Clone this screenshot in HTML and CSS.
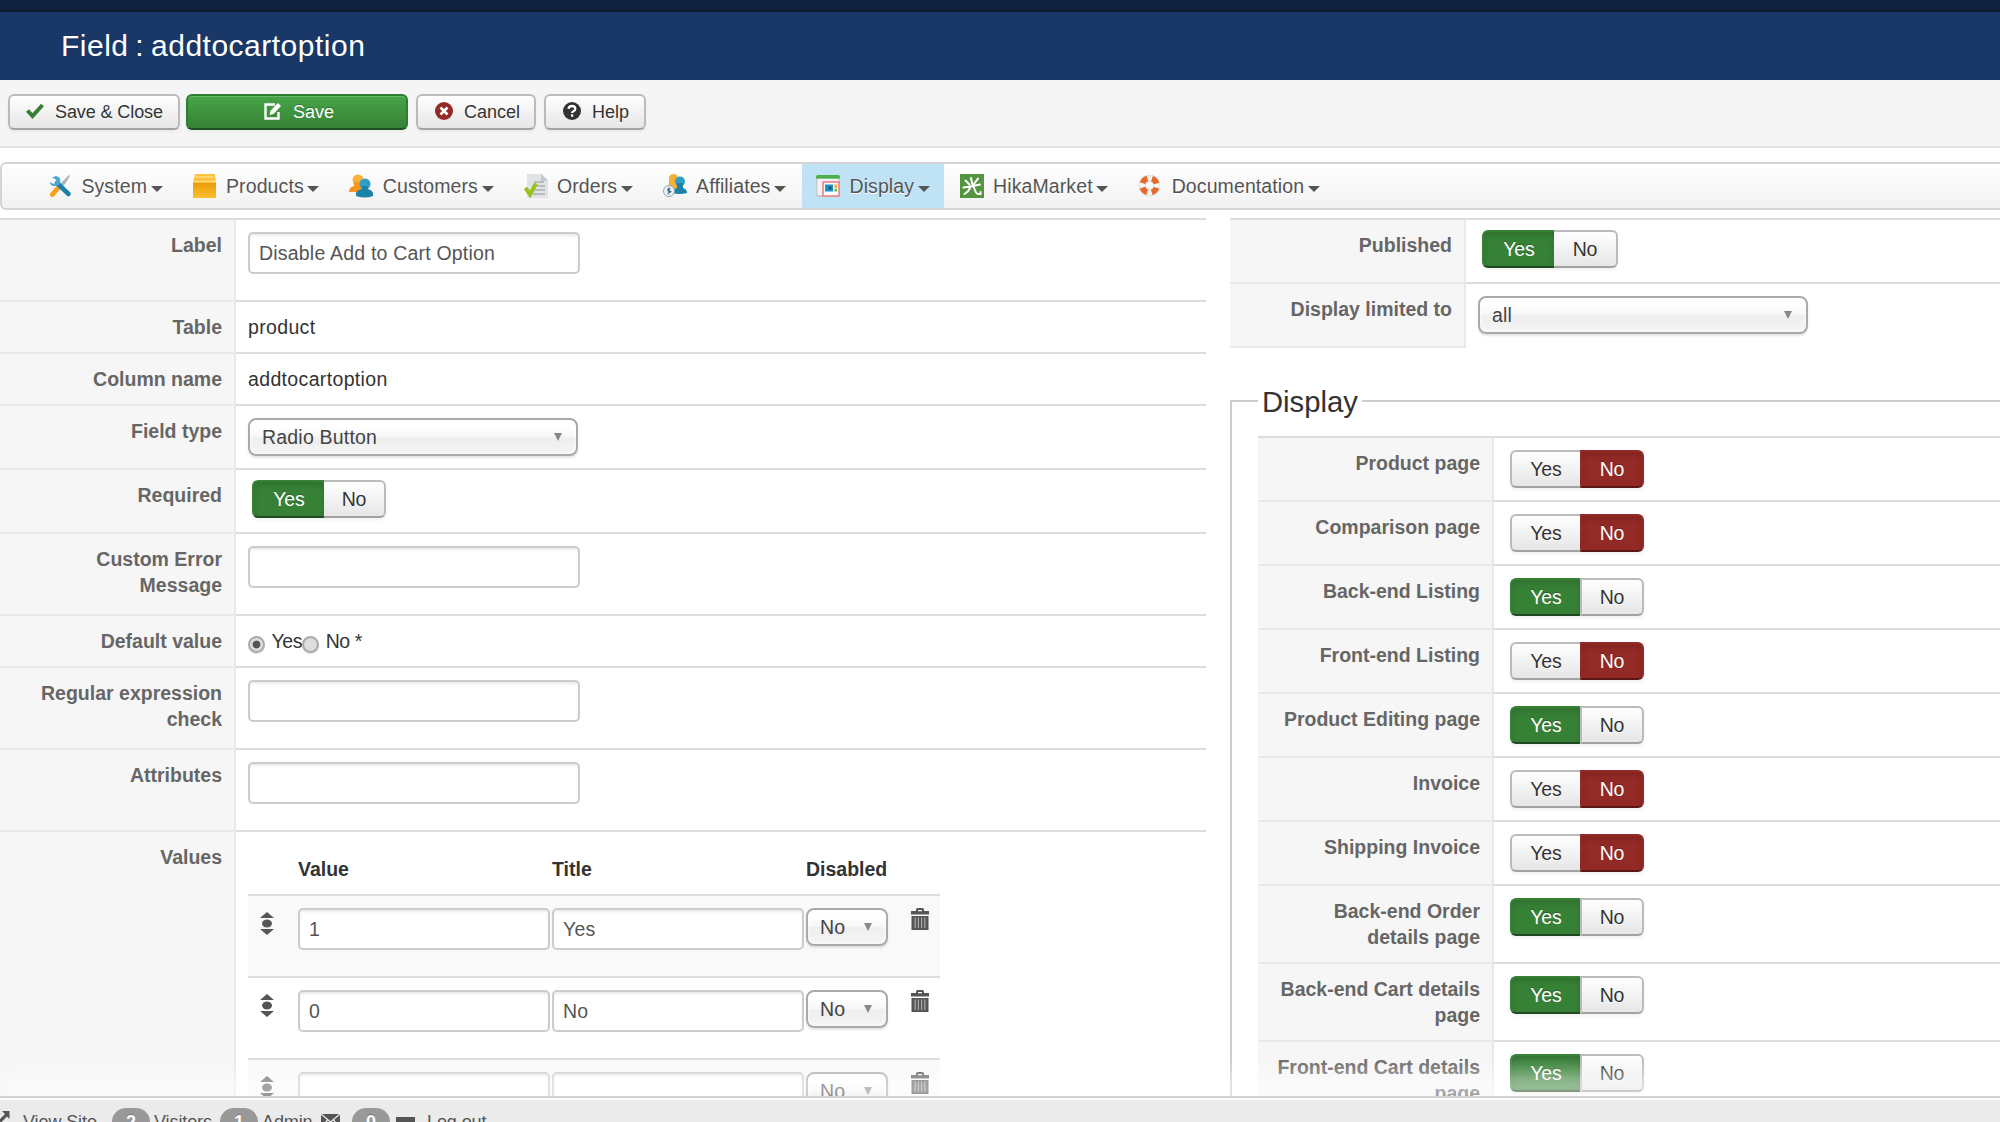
FILE: index.html
```html
<!DOCTYPE html>
<html lang="en">
<head>
    <meta charset="UTF-8">
    <title>Field : addtocartoption</title>
    <link rel="stylesheet" href="styles.css">
</head>
<body>
    <!-- Shared icons -->
    <svg class="defs" width="0" height="0">
        <symbol id="icon-move" viewBox="0 0 14 23">
            <path d="M7 0l7 6H0zM7 23l7-6H0z"/>
            <ellipse cx="7" cy="11.500" rx="5" ry="4"/>
        </symbol>
        <symbol id="icon-trash" viewBox="0 0 18 22">
            <path d="M5 3V1.5Q5 0 6.500 0h5Q13 0 13 1.500V3h5v3.500H0V3zM7 2v1.200h4V2z" fill-rule="evenodd"/>
            <path d="M.5 8h17v14H.5z"/>
            <path d="M4.200 9.500v10.500M7.400 9.500v10.500M10.600 9.500v10.500M13.800 9.500v10.500" stroke="#aaa" stroke-width="1.200"/>
        </symbol>
    </svg>

    <div class="topbar"></div>
    <header class="header">
        <h1>Field : addtocartoption</h1>
    </header>

    <div class="toolbar">
        <button class="btn btn-apply">
            <svg width="18" height="18" viewBox="0 0 18 18"><path d="M1.500 8.500l5 5.500L16.500 3" fill="none" stroke="#378137" stroke-width="4"/></svg>
            Save &amp; Close
        </button>
        <button class="btn btn-success">
            <svg width="18" height="18" viewBox="0 0 18 18"><path d="M11 2.500H1.500v14h13V10" fill="none" stroke="#fff" stroke-width="2.400"/><path d="M5.500 13l1-4.200L14 1l3 3-7.500 8z" fill="#fff"/></svg>
            Save
        </button>
        <button class="btn btn-cancel">
            <svg width="18" height="18" viewBox="0 0 18 18"><circle cx="9" cy="9" r="9" fill="#942a25"/><path d="M5.500 5.500l7 7M12.500 5.500l-7 7" stroke="#fff" stroke-width="2.600"/></svg>
            Cancel
        </button>
        <button class="btn btn-help">
            <svg width="18" height="18" viewBox="0 0 18 18"><circle cx="9" cy="9" r="9" fill="#333"/><path d="M5.500 6.800Q5.800 4 9 4t3.300 2.700Q12.300 8.500 10.400 9.300 9.100 9.900 9.100 11" fill="none" stroke="#fff" stroke-width="2.300"/><path d="M7.900 12.300h2.400v2.400H7.900z" fill="#fff"/></svg>
            Help
        </button>
    </div>

    <nav class="navbar">
        <a class="nav-item">
            <svg width="24" height="24" viewBox="0 0 24 24"><path d="M22 2l-1-1-7 7-3 4 2 2 4-4z" fill="#aeb4b8"/><path d="M10 14L4.500 20.500" stroke="#f6a11c" stroke-width="5" stroke-linecap="round"/><path d="M9 9l11.500 11" stroke="#1b7fae" stroke-width="4.500" stroke-linecap="round"/><path d="M4 4l3.500 1 .5 3.500-2.500 1.500-3.500-2Q2 12 6.500 12q5 0 6-4Q12.500 2 7.500 2z" fill="#4ba7d4"/></svg>
            <span>System</span><i class="caret"></i>
        </a>
        <a class="nav-item">
            <svg width="24" height="24" viewBox="0 0 24 24"><path d="M2 0h20l1 8H0z" fill="#fbc340"/><path d="M0 8h23v16H0z" fill="url(#box)"/><path d="M0 7h23v1.500H0z" fill="#ffe08a"/><path d="M2 3h19" stroke="#ffdc7c" stroke-width="1.500"/><defs><linearGradient id="box" x2="0" y2="1"><stop stop-color="#e99a06"/><stop offset="1" stop-color="#fdc02f"/></linearGradient></defs></svg>
            <span>Products</span><i class="caret"></i>
        </a>
        <a class="nav-item">
            <svg width="24" height="24" viewBox="0 0 24 24"><circle cx="9" cy="6" r="5.500" fill="#fbb03b"/><path d="M0 18q0-5 5-6V8h8v10z" fill="#f7941d"/><circle cx="16" cy="10" r="5.500" fill="#2f9fca"/><path d="M7 22v-3q1-3 6-4v-3h6v3q4 1 5 4v3q-8 3-17 0z" fill="#1b82a8"/></svg>
            <span>Customers</span><i class="caret"></i>
        </a>
        <a class="nav-item">
            <svg width="24" height="24" viewBox="0 0 24 24"><path d="M3 0h15l6 6v18H3z" fill="#dfe3e6"/><path d="M17 0l7 7h-7z" fill="#c3c9cd"/><path d="M10 8h10M12 12h9M11 16h10M9 20h12" stroke="#a9b0b4" stroke-width="1.600"/><path d="M1.500 14L6 20.500 12 9.500" fill="none" stroke="#96c11f" stroke-width="4"/></svg>
            <span>Orders</span><i class="caret"></i>
        </a>
        <a class="nav-item">
            <svg width="24" height="24" viewBox="0 0 24 24"><path d="M6 15V5q0-5 4.500-5T15 5v10z" fill="#f9ae35"/><circle cx="17" cy="7.500" r="5" fill="#2f9fca"/><path d="M9 19q0-4 5-5V9h6v5q4 1 4 5-7 2-15 0z" fill="#1b82a8"/><circle cx="6" cy="17" r="5.500" fill="#eef3f6" stroke="#8fa9b8"/><path d="M7.500 15Q4.500 14 4.800 16t2.500 1.500T4.500 19.500M6 13.500v7" fill="none" stroke="#41708c" stroke-width="1.300"/></svg>
            <span>Affiliates</span><i class="caret"></i>
        </a>
        <a class="nav-item active">
            <svg width="24" height="24" viewBox="0 0 24 24"><rect y="1" width="24" height="22" rx="2" fill="#c5cbce"/><path d="M1.500 5h21v16h-21z" fill="#f1f4f5"/><path d="M0 4.500V3q0-2 2-2h20q2 0 2 2v1.500z" fill="#4bb04a"/><rect x="7" y="8" width="16" height="14" fill="#fff" stroke="#eb8280" stroke-width="1.600"/><path d="M9 10.500h8v7H9z" fill="#1f94c5"/><path d="M12.500 12.500h3v3h-3z" fill="#1a5373"/><path d="M18.500 10.500H21V14h-2.500z" fill="#f3a72d"/><path d="M18.500 14.800H21v2.700h-2.500z" fill="#58b158"/></svg>
            <span>Display</span><i class="caret"></i>
        </a>
        <a class="nav-item">
            <svg width="24" height="24" viewBox="0 0 24 24"><path d="M0 0h24v24H0z" fill="#559440"/><path d="M11 4l1.500 7M5.500 6.500l4 4M18 4.500L14 10M3.500 13.500Q12 12.500 20 10.500M10.500 13Q9 17.500 4.500 20M13.500 12.500l2 5q1 2.500 3 2.500h2v-2" fill="none" stroke="#fff" stroke-width="2" stroke-linecap="round"/></svg>
            <span>HikaMarket</span><i class="caret"></i>
        </a>
        <a class="nav-item">
            <svg width="24" height="24" viewBox="0 0 24 24"><circle cx="11.500" cy="11.500" r="7.300" fill="none" stroke="#d2d4d5" stroke-width="7"/><circle cx="11.500" cy="11.500" r="7.300" fill="none" stroke="#f4f4f4" stroke-width="5.800"/><circle cx="11.500" cy="11.500" r="7.300" fill="none" stroke="#e8672a" stroke-width="5.600" stroke-dasharray="6.800 4.670" stroke-dashoffset="-2.300"/></svg>
            <span>Documentation</span><i class="caret"></i>
        </a>
    </nav>

    <main class="content">
        <div class="col-left">
            <table class="admintable">
                <tr>
                    <td class="key">Label</td>
                    <td><input type="text" value="Disable Add to Cart Option"></td>
                </tr>
                <tr>
                    <td class="key">Table</td>
                    <td>product</td>
                </tr>
                <tr>
                    <td class="key">Column name</td>
                    <td>addtocartoption</td>
                </tr>
                <tr>
                    <td class="key">Field type</td>
                    <td><div class="select">Radio Button</div></td>
                </tr>
                <tr>
                    <td class="key">Required</td>
                    <td class="tight"><div class="toggle toggle-required"><span class="yes on">Yes</span><span class="no">No</span></div></td>
                </tr>
                <tr>
                    <td class="key">Custom Error Message</td>
                    <td><input type="text"></td>
                </tr>
                <tr>
                    <td class="key">Default value</td>
                    <td>
                        <div class="radios">
                            <input type="radio" name="default" checked><label>Yes</label><input type="radio" name="default"><label>No *</label>
                        </div>
                    </td>
                </tr>
                <tr>
                    <td class="key">Regular expression check</td>
                    <td><input type="text"></td>
                </tr>
                <tr>
                    <td class="key">Attributes</td>
                    <td><input type="text"></td>
                </tr>
                <tr>
                    <td class="key">Values</td>
                    <td>
                        <div class="values">
                            <div class="values-head">
                                <span class="c-move"></span><span class="c-input">Value</span><span class="c-input">Title</span><span>Disabled</span>
                            </div>
                            <div class="values-row odd">
                                <svg class="move" width="14" height="23"><use href="#icon-move"/></svg>
                                <input type="text" value="1"><input type="text" value="Yes">
                                <div class="select select-small">No</div>
                                <svg class="trash" width="18" height="22"><use href="#icon-trash"/></svg>
                            </div>
                            <div class="values-row">
                                <svg class="move" width="14" height="23"><use href="#icon-move"/></svg>
                                <input type="text" value="0"><input type="text" value="No">
                                <div class="select select-small">No</div>
                                <svg class="trash" width="18" height="22"><use href="#icon-trash"/></svg>
                            </div>
                            <div class="values-row odd">
                                <svg class="move" width="14" height="23"><use href="#icon-move"/></svg>
                                <input type="text"><input type="text">
                                <div class="select select-small">No</div>
                                <svg class="trash" width="18" height="22"><use href="#icon-trash"/></svg>
                            </div>
                        </div>
                    </td>
                </tr>
            </table>
        </div>

        <div class="col-right">
            <table class="admintable publish">
                <tr>
                    <td class="key">Published</td>
                    <td class="tight"><div class="toggle toggle-published"><span class="yes on">Yes</span><span class="no">No</span></div></td>
                </tr>
                <tr>
                    <td class="key">Display limited to</td>
                    <td><div class="select">all</div></td>
                </tr>
            </table>

            <section class="fieldset">
                <h2 class="legend"><span>Display</span></h2>
                <table class="admintable">
                    <tr>
                        <td class="key">Product page</td>
                        <td><div class="toggle"><span class="yes">Yes</span><span class="no on">No</span></div></td>
                    </tr>
                    <tr>
                        <td class="key">Comparison page</td>
                        <td><div class="toggle"><span class="yes">Yes</span><span class="no on">No</span></div></td>
                    </tr>
                    <tr>
                        <td class="key">Back-end Listing</td>
                        <td><div class="toggle"><span class="yes on">Yes</span><span class="no">No</span></div></td>
                    </tr>
                    <tr>
                        <td class="key">Front-end Listing</td>
                        <td><div class="toggle"><span class="yes">Yes</span><span class="no on">No</span></div></td>
                    </tr>
                    <tr>
                        <td class="key">Product Editing page</td>
                        <td><div class="toggle"><span class="yes on">Yes</span><span class="no">No</span></div></td>
                    </tr>
                    <tr>
                        <td class="key">Invoice</td>
                        <td><div class="toggle"><span class="yes">Yes</span><span class="no on">No</span></div></td>
                    </tr>
                    <tr>
                        <td class="key">Shipping Invoice</td>
                        <td><div class="toggle"><span class="yes">Yes</span><span class="no on">No</span></div></td>
                    </tr>
                    <tr>
                        <td class="key">Back-end Order details page</td>
                        <td><div class="toggle"><span class="yes on">Yes</span><span class="no">No</span></div></td>
                    </tr>
                    <tr>
                        <td class="key">Back-end Cart details page</td>
                        <td><div class="toggle"><span class="yes on">Yes</span><span class="no">No</span></div></td>
                    </tr>
                    <tr>
                        <td class="key">Front-end Cart details page</td>
                        <td><div class="toggle"><span class="yes on">Yes</span><span class="no">No</span></div></td>
                    </tr>
                </table>
            </section>
        </div>
    </main>

    <footer class="status">
        <svg class="s-link" width="10" height="18" viewBox="0 0 10 18"><path d="M2 0h7.500v8L7 5.500l-7 7V8l5-5z"/><path d="M0 17h6v-4" fill="none" stroke="#555" stroke-width="2"/></svg>
        <span class="s-view">View Site</span>
        <span class="badge">2</span><span class="s-visitors">Visitors</span>
        <span class="badge">1</span><span class="s-admin">Admin</span>
        <svg class="s-mail" width="19" height="14" viewBox="0 0 19 14"><path d="M0 0h19v14H0z"/><path d="M0 0l9.500 8L19 0M0 14l6.500-8M19 14l-6.500-8" fill="none" stroke="#ebebeb" stroke-width="1.300"/></svg>
        <span class="badge">0</span>
        <svg class="s-minus" width="19" height="6"><path d="M0 0h19v6H0z"/></svg>
        <span>Log out</span>
    </footer>
</body>
</html>
```

FILE: styles.css
```css
* {
    margin: 0;
    padding: 0;
    box-sizing: border-box;
}

body {
    display: flex;
    flex-direction: column;
    height: 1122px;
    overflow: hidden;
    background: #fff;
    color: #333;
    font-family: "Liberation Sans", Arial, Helvetica, sans-serif;
    font-size: 19.5px;
    line-height: 26px;
    letter-spacing: 0.35px;
}

.defs {
    position: absolute;
}

.topbar {
    flex: none;
    height: 12px;
    background: #10223e;
    border-bottom: 2px solid #0c182b;
}

.header {
    flex: none;
    height: 68px;
    padding: 14px 0 0 61px;
    background: #1a3867;
    color: #fff;
}

.header h1 {
    font-size: 30px;
    font-weight: normal;
    line-height: 40px;
    letter-spacing: 0.5px;
    word-spacing: -2px;
}

/* Toolbar */
.toolbar {
    display: flex;
    flex: none;
    gap: 8px;
    height: 68px;
    padding: 14px 8px;
    background: #f5f5f5;
    border-bottom: 2px solid #e3e3e3;
}

.btn {
    display: flex;
    align-items: center;
    gap: 11px;
    height: 36px;
    padding: 1px 0 0 17px;
    border: 2px solid #bbb;
    border-bottom-color: #a2a2a2;
    border-radius: 6px;
    background: linear-gradient(#fff, #e6e6e6);
    box-shadow: 0 2px 3px rgba(0, 0, 0, 0.05);
    color: #333;
    font-family: inherit;
    font-size: 18px;
    letter-spacing: 0;
    text-shadow: 0 1px 1px rgba(255, 255, 255, 0.75);
}

.btn svg {
    position: relative;
    top: -2px;
}

.btn-apply {
    width: 172px;
    margin-right: -2px;
    padding-left: 16px;
    letter-spacing: -0.1px;
}

.btn-success {
    width: 222px;
    padding-left: 76px;
    border-color: #2f7d2f;
    border-bottom-color: #1f4f1f;
    background: linear-gradient(#46a546, #378137);
    box-shadow: inset 0 1px 0 rgba(255, 255, 255, 0.2), 0 2px 3px rgba(0, 0, 0, 0.05);
    color: #fff;
    text-shadow: 0 -1px 0 rgba(0, 0, 0, 0.25);
}

.btn-cancel {
    width: 120px;
}

.btn-help {
    width: 102px;
    padding-left: 17px;
}

/* Menu */
.navbar {
    display: flex;
    flex: none;
    gap: 2px;
    height: 48px;
    margin: 14px -10px 0 0;
    padding-left: 32px;
    border: 2px solid #d4d4d4;
    border-radius: 6px;
    background: linear-gradient(#fff, #f2f2f2);
    letter-spacing: 0.1px;
}

.nav-item {
    display: flex;
    align-items: center;
    padding: 0 14px;
    color: #555;
    text-shadow: 0 1px 0 #fff;
}

.nav-item svg {
    margin-right: 9.4px;
}

.nav-item.active {
    background: #bfe2f4;
}

.caret {
    margin: 6px 0 0 3.6px;
    border: 6px solid transparent;
    border-top-color: #555;
    border-bottom: 0;
}

/* Form tables */
.content {
    display: flex;
    flex: 1;
    gap: 24px;
    min-height: 0;
    padding-top: 8px;
    overflow: hidden;
}

.col-left {
    flex: none;
    width: 1206px;
}

.col-right {
    flex: 1;
}

.admintable {
    width: 100%;
    border-spacing: 0;
    table-layout: fixed;
}

.admintable td {
    padding: 12px;
    border-top: 2px solid #ddd;
    vertical-align: top;
}

.admintable td.tight {
    padding-top: 10px;
    padding-bottom: 14px;
}

.admintable td.key {
    width: 236px;
    border-top-color: #e9e9e9;
    border-right: 2px solid #e9e9e9;
    background: #f6f6f6;
    color: #666;
    font-weight: bold;
    letter-spacing: 0;
    text-align: right;
}

.admintable tr:first-child td.key {
    border-top-color: #ddd;
}

.publish tr:last-child td.key {
    height: 66px;
    border-bottom: 2px solid #e9e9e9;
}

input[type="text"] {
    display: block;
    width: 332px;
    height: 42px;
    margin-bottom: 14px;
    padding: 0 9px;
    border: 2px solid #ccc;
    border-radius: 5px;
    background: #fff;
    box-shadow: inset 0 2px 2px rgba(0, 0, 0, 0.075);
    color: #555;
    font-family: inherit;
    font-size: 19.5px;
    letter-spacing: 0.2px;
}

.select {
    display: flex;
    align-items: center;
    justify-content: space-between;
    width: 330px;
    height: 38px;
    padding: 0 14px 0 12px;
    border: 2px solid #aaa;
    border-radius: 8px;
    background: linear-gradient(#fff 20%, #f6f6f6 50%, #eee 52%, #f4f4f4 100%);
    box-shadow: inset 0 0 4px #fff, 0 2px 2px rgba(0, 0, 0, 0.1);
    color: #444;
    letter-spacing: 0.2px;
}

.select::after {
    content: "";
    margin-bottom: 1px;
    border: 4.5px solid transparent;
    border-top: 8px solid #888;
    border-bottom: 0;
}

.select-small {
    width: 82px;
}

/* Yes / No switch */
.toggle {
    display: flex;
    width: 134px;
    height: 38px;
    margin-left: 4px;
    border-radius: 6px;
    box-shadow: 0 2px 3px rgba(0, 0, 0, 0.06);
    letter-spacing: -0.1px;
    line-height: 35px;
    text-align: center;
}

.toggle span {
    border: 2px solid #bbb;
    border-bottom-color: #a2a2a2;
    background: linear-gradient(#fff, #e6e6e6);
    text-shadow: 0 1px 1px rgba(255, 255, 255, 0.75);
}

.toggle .yes {
    width: 70px;
    border-right: 0;
    border-radius: 6px 0 0 6px;
}

.toggle .no {
    flex: 1;
    border-radius: 0 6px 6px 0;
}

.toggle .on {
    border-color: #378137;
    border-bottom-color: #204b20;
    background: #378137;
    box-shadow: inset 0 3px 6px rgba(0, 0, 0, 0.15);
    color: #fff;
    text-shadow: 0 -1px 0 rgba(0, 0, 0, 0.25);
}

.toggle .no.on {
    border-color: #942a25;
    border-bottom-color: #571916;
    background: #942a25;
}

.toggle-required .yes,
.toggle-published .yes {
    width: 72px;
}

.toggle-required .no,
.toggle-published .no {
    border-left: 0;
}

.toggle-published {
    width: 136px;
}

.radios {
    display: flex;
    height: 26px;
    letter-spacing: -0.4px;
}

.radios input {
    appearance: none;
    width: 17px;
    height: 17px;
    margin: 8px 6.5px 0 0;
    border: 2px solid #aaa;
    border-radius: 50%;
    background: #ddd;
    box-shadow: 0 1px 1px rgba(0, 0, 0, 0.15);
}

.radios input:checked {
    background: radial-gradient(circle, #555 3.5px, #ddd 4.3px);
}

/* Values list */
.values {
    width: 692px;
}

.values-head {
    display: flex;
    padding: 12px 0;
    font-weight: bold;
    letter-spacing: 0;
}

.c-move {
    width: 50px;
}

.c-input {
    width: 254px;
}

.values-row {
    display: flex;
    gap: 2px;
    height: 82px;
    padding-top: 12px;
    border-top: 2px solid #ddd;
}

.values-row.odd {
    background: #f9f9f9;
}

.values-row input[type="text"] {
    width: 252px;
}

.values-row svg {
    flex: none;
    fill: #555;
}

.values-row .move {
    margin: 4px 22px 0 12px;
}

.values-row .trash {
    margin-left: 21px;
}

/* Display group */
.fieldset {
    margin-top: 52px;
    padding: 0 0 0 26px;
    border-top: 2px solid #ccc;
    border-left: 2px solid #ccc;
}

.legend {
    height: 34px;
    font-size: 29.25px;
    font-weight: normal;
    letter-spacing: 0;
}

/* Sits over the group's top border */
.legend span {
    display: block;
    width: 104px;
    height: 36px;
    padding-left: 4px;
    position: relative;
    top: -18px;
    background: #fff;
    line-height: 36px;
}

/* Status bar */
.status {
    position: relative;
    display: flex;
    flex: none;
    height: 26px;
    padding-top: 10px;
    border-top: 2px solid #d4d4d4;
    background: #ebebeb;
    box-shadow: inset 0 2px 0 rgba(255, 255, 255, 0.8), 0 -22px 22px rgba(255, 255, 255, 0.6);
    color: #555;
    font-size: 18px;
    letter-spacing: -0.1px;
    line-height: 28px;
    white-space: nowrap;
}

.status svg {
    flex: none;
    fill: #555;
}

.s-link {
    margin: 3px 13px 0 0;
}

.s-view {
    width: 89px;
}

.s-visitors {
    width: 66px;
}

.s-admin {
    width: 60px;
}

.s-mail {
    margin: 6px 12px 0 -1px;
}

.s-minus {
    margin: 9px 12px 0 2px;
}

.badge {
    flex: none;
    width: 38px;
    height: 30px;
    margin-right: 4px;
    border-radius: 14px;
    background: #999;
    color: #fff;
    font-weight: bold;
    text-align: center;
    text-shadow: 0 -1px 0 rgba(0, 0, 0, 0.25);
}
```
